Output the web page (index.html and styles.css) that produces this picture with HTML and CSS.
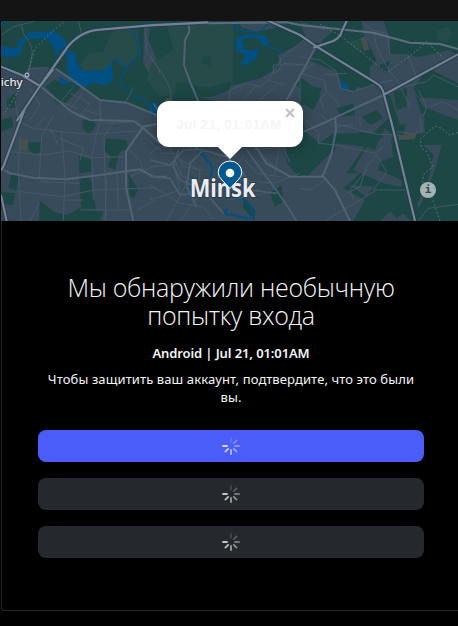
FILE: index.html
```html
<!DOCTYPE html>
<html lang="ru">
<head>
<meta charset="utf-8">
<title>Instagram</title>
<link rel="stylesheet" href="styles.css">
</head>
<body>
<header class="topbar"></header>
<main class="card">
<section class="map">
<svg class="tiles" viewBox="3 63 1371 600" preserveAspectRatio="none">
<g class="park">
<path d="M3 63H1374V663H1230L1210 640 1190 655 1170 635 1140 663H1060L1095 600 1030 565 1080 520 1010 520 1060 480 1040 440 990 460 920 530 900 500V430L700 300 480 355 380 308 300 300 215 240 170 205 85 203 75 225 3 195Z"/>
<path d="M137 260L160 240 250 252 190 318 165 306 160 285ZM20 300L47 278 50 322 22 325ZM3 360L35 350 40 380 3 395ZM247 360L280 358 288 375 280 390 265 402 248 385ZM85 428L123 426 123 455 103 463 86 450ZM318 415L380 420 385 445 360 455 345 510 322 500 335 470 312 450ZM237 468L277 480 275 515 238 520ZM238 534H272L288 627 243 625ZM35 525L60 525 48 573 25 562ZM3 575L45 580 40 615 3 612ZM118 600L160 635 200 645 240 625 310 635 300 663H118ZM385 520L415 570 400 595 388 585Z"/>
<path d="M860 380L900 390 930 425V520L895 530 860 490ZM810 580L845 555 850 605 825 620ZM730 590L765 630 765 663 730 625ZM505 310L560 285 565 350 520 370Z"/>
</g>
<g class="land">
<path d="M432 80L450 85 445 120 475 190 450 225 430 190ZM555 105L575 95H625L635 165 610 195 555 193ZM715 63H850L820 85 770 95 725 83ZM590 290L690 258 780 235 840 200 835 165 880 140 915 120 955 145 925 180 1010 215 1025 250 1090 265 1130 250 1150 290 1080 320 1020 320 960 340 900 330 660 305Z"/>
<path d="M900 65L1000 90 960 130 920 120ZM1085 63H1150L1170 115 1170 165 1260 170 1345 150 1374 165V250L1285 205 1240 265 1270 320 1374 360V300L1160 285 1110 240 1110 200 1130 180 1090 100Z"/>
<path d="M900 330L1030 300 1150 285 1170 350 1120 400 1000 400 960 430 920 400ZM1170 285L1240 270 1270 360 1200 375ZM1225 340L1270 340 1275 400 1210 405ZM1100 440L1170 400 1180 470 1140 485 1135 510 1205 540 1205 560 1150 550 1060 510ZM1270 435H1325L1305 510 1260 620 1250 615 1285 540 1300 465ZM930 350L1000 390 945 385ZM1008 430L1095 440 1035 525 990 525ZM1045 555L1120 560 1100 590ZM1155 385L1180 410 1170 430 1145 405Z"/>
</g>
<g class="park">
<path d="M900 260L960 290 940 330 905 310ZM1010 325L1060 310 1065 345 1025 350ZM1085 350L1130 330 1150 355 1110 375ZM1080 395L1140 410 1125 450 1050 425Z"/>
</g>
<g class="meadow">
<path d="M240 195L265 160 310 155 330 105 350 80 415 88 422 165 390 185 380 208 340 178 325 210 255 212ZM500 70H700L698 250 635 265 530 245 525 285 480 290 440 240 455 190 520 150ZM1310 90L1345 80 1355 105 1340 125 1315 120ZM1040 130L1090 110 1110 145 1090 160Z"/>
</g>
<g class="park">
<path d="M458 95L500 85 510 125 480 145 460 130ZM610 170L632 168 630 197 605 190ZM585 270L630 260 690 245 690 270 635 290 585 292ZM700 205L790 210 785 235 705 225ZM820 100L870 80 905 120 875 145 830 140ZM885 250L905 235 940 260 920 290ZM900 250L965 265 950 310 900 315ZM1050 220L1080 240 1065 275 1035 260ZM1180 275L1220 265 1220 320 1190 330ZM1130 200L1170 180 1160 220Z"/>
</g>
<g class="soil"><path d="M58 417L85 418 80 455 57 450ZM1195 405L1250 401 1245 418 1197 420ZM1082 115L1097 108 1108 150 1093 150ZM497 295H515V315H492Z"/></g>
<g class="water">
<path d="M3 63H15L3 83ZM3 137L35 145 60 140 50 130 55 118 75 112 85 98 110 94 140 97 155 90 180 105 200 125 204 150 225 160 232 190 245 210 305 213 332 192 335 182 340 240 320 255 280 250 250 262 225 255 208 230 201 200V165L165 165 162 145 140 115 110 118 78 116 75 130 65 140 65 160 45 170 3 170ZM180 230L210 250 195 258 180 247ZM717 108L750 103 795 107 805 120 805 137 783 137 782 120 735 113 722 125 735 130 735 148 755 152 775 145 776 155 768 177 740 195 718 193 733 180 733 162 708 150 706 130ZM1020 235L1033 250 1047 258 1043 268 1027 270ZM450 305L462 335H468V350L450 340ZM450 310H474V345H460Z"/>
</g>
<g class="park"><path d="M735 120L770 111 785 130 770 150 730 143ZM173 148L187 148 189 155 177 158ZM57 122L66 126 60 132 54 130Z"/></g>
<g class="stream">
<path d="M335 180L345 178 370 190 382 205 360 240 370 265 400 275 405 290 430 296 450 320 466 340M385 195L405 175 424 160 415 125 399 95V85M430 70L445 72 450 85M697 70L705 85 735 93 775 97 795 80 805 70M805 138L850 158"/>
<path class="river" d="M457 330L469 340M592 463H610L618 477 632 493 637 510 632 530M600 445L597 440M700 595L730 598 754 625 761 648 745 656 700 645 678 643 674 635 684 625"/>
</g>
<g class="minor">
<path d="M3 105L40 80 100 65M65 77L70 100 90 130 97 155 92 190 85 220M235 63L245 103M85 205L145 203M400 262L378 305M220 262L182 305M248 280L215 322M300 305V360M210 280L270 310 240 348M182 305L230 325M90 265L120 315 90 360M45 300L55 360M436 85L440 155 475 205 480 220M450 170L490 225 510 265 515 300"/>
<path d="M75 335L60 365 100 385 185 395 270 403 405 393M60 410L55 515 63 663M100 390L135 350M160 345L125 410 118 535M185 395L195 530 190 663M150 385L175 435M180 415L250 445 240 480M30 455L130 465 205 453 280 473 370 470M305 350L290 400 275 475 280 600M345 360L312 410 318 663M320 370L410 365M320 533L315 660M350 520L355 630M60 575L190 590 280 570 470 563M120 545L240 550M120 605L90 663M190 600H250M240 630H390M380 440L425 490 430 520M390 530L470 495M410 630L470 600M255 330L300 345 305 330"/>
<path d="M688 270L740 250 780 260 805 240 850 255M688 270V300M805 240L845 175 900 130 930 105M840 170V210L820 220 820 195H900M730 300L770 255M780 300L830 255M850 190L920 195M900 170L960 180 1010 215 1020 265 1060 275 1130 250 1180 240M900 220L970 240 980 270 960 300 970 320M940 190L900 225 900 330M970 225L1040 220M970 260L1020 320M1090 70L1120 90 1130 140 1160 200 1190 240 1230 320M1120 90L1160 100 1170 165 1225 165M1225 165L1240 210 1255 240M1210 260L1280 245 1300 225 1374 260M1255 270L1280 320 1270 350M1290 320L1330 305 1374 330M960 340L1000 380 1060 375M1260 350L1265 390 1240 402 1190 395"/>
<path d="M920 360L955 400 955 430 1010 435 1125 460 1150 440M1005 370L1130 403 1200 405M1080 350L1080 380M1130 465L1160 515 1120 570M1100 510L1050 570 1060 600M1130 465L1100 500 1080 560 1040 580M1120 570H1215M975 663L1125 573M1255 663L1285 625 1374 613M900 565L930 570 975 540"/>
</g>
<g class="minor">
<path d="M450 425L490 460 530 460 550 500 610 510M450 500L520 495 540 570 450 600M510 440L545 530 660 560M450 555L540 610 610 620 640 660M540 480L600 510 590 600M730 470L700 510 680 590M735 480L770 520 840 530M760 450L850 440 870 490M720 540L820 550 900 520M770 440L830 510M690 600L800 580M500 663L560 550M600 580L540 663M810 540L860 620M840 430L820 540M560 430L590 460M450 330L480 365M480 440L450 460"/>
</g>
<g class="mid">
<path d="M165 205L210 235 300 300 380 308 480 350M120 258L160 290 215 335 235 345 270 360 400 363 425 380 480 430M480 370L430 380 378 455 378 560 400 663M3 505L30 520 100 533 200 538 300 525 420 508 460 530 500 530M565 65L568 95 555 120 552 195 570 245 595 305"/>
<path class="inner" d="M450 480L510 495 550 450 600 448 680 470 730 520 755 570 830 580M535 450L520 500 540 540 610 570 670 640M610 450L570 490 560 560 590 620M450 530L510 535 540 585 670 570M740 450L850 600 890 663M460 310L520 400 600 450"/>
<path d="M760 430L800 490 870 530H970L1005 570 1050 663M900 400L980 365 1150 285M1005 350L1008 390 995 460 972 520 965 530M945 145L910 210 860 300"/>
</g>
<path class="mid north" d="M450 74L620 70 860 67 900 75 1120 98 1230 128 1320 132 1374 147"/>
<g class="shade"><path d="M50 363L120 258 205 138Q245 92 300 89L450 76 625 67M3 200L65 225 120 258 160 208M800 60L900 105 950 140 1130 250Q1148 260 1152 285L1175 370 1245 663M1150 285L1374 163M940 143L1000 123Q1022 112 1025 95L1040 63M75 325L10 500 3 512M3 585L20 663"/></g>
<g class="major"><path d="M50 363L120 258 205 138Q245 92 300 89L450 76 625 67M3 200L65 225 120 258 160 208M800 60L900 105 950 140 1130 250Q1148 260 1152 285L1175 370 1245 663M1150 285L1374 163M940 143L1000 123Q1022 112 1025 95L1040 63M75 325L10 500 3 512M3 585L20 663"/></g>
<path class="trail" d="M190 66L145 106 105 145 85 210 45 290 10 345M960 72L1025 110 1100 170 1160 218 1240 160 1280 125 1330 175M1374 398L1347 405 1325 385 1305 378 1260 418 1265 445 1280 455 1298 500 1270 525 1268 550M1295 590L1320 663"/>
<circle class="town" cx="81" cy="225" r="6"/>
<text class="place" x="-16" y="257" textLength="84" lengthAdjust="spacingAndGlyphs">vichy</text>
<text class="city" x="569" y="591" textLength="198" lengthAdjust="spacingAndGlyphs">Minsk</text>
</svg>
<div class="popup"><span class="popup-date">Jul 21, 01:01AM</span><svg class="close" viewBox="0 0 10 10"><path d="M1 1l8 8M9 1L1 9"/></svg></div>
<svg class="pin" viewBox="0 0 26 30"><path d="M13 28.5L5 20Q1.2 16.5 1.2 12.5a11.8 11.5 0 0 1 23.6 0Q24.8 16.5 21 20Z"/><circle cx="13" cy="13" r="4.3"/></svg>
<div class="info">i</div>
</section>
<section class="content">
<h1>Мы обнаружили необычную<br>попытку входа</h1>
<p class="device">Android | Jul 21, 01:01AM</p>
<p class="hint">Чтобы защитить ваш аккаунт, подтвердите, что это были<br>вы.</p>
<div class="actions">
<button class="btn primary"><svg class="spin" viewBox="-9 -9 18 18"><path opacity=".15" d="M0-4V-8"/><path opacity=".32" d="M2.8-2.8L5.6-5.6"/><path opacity=".4" d="M4 0H8"/><path opacity=".5" d="M2.8 2.8L5.6 5.6"/><path opacity=".65" d="M0 4V8"/><path opacity=".8" d="M-2.8 2.8L-5.6 5.6"/><path opacity=".85" d="M-4 0H-8"/></svg></button>
<button class="btn"><svg class="spin" viewBox="-9 -9 18 18"><path opacity=".15" d="M0-4V-8"/><path opacity=".25" d="M2.8-2.8L5.6-5.6"/><path opacity=".4" d="M4 0H8"/><path opacity=".5" d="M2.8 2.8L5.6 5.6"/><path opacity=".6" d="M0 4V8"/><path opacity=".75" d="M-2.8 2.8L-5.6 5.6"/><path opacity=".8" d="M-4 0H-8"/></svg></button>
<button class="btn"><svg class="spin" viewBox="-9 -9 18 18"><path opacity=".15" d="M0-4V-8"/><path opacity=".25" d="M2.8-2.8L5.6-5.6"/><path opacity=".4" d="M4 0H8"/><path opacity=".5" d="M2.8 2.8L5.6 5.6"/><path opacity=".6" d="M0 4V8"/><path opacity=".75" d="M-2.8 2.8L-5.6 5.6"/><path opacity=".8" d="M-4 0H-8"/></svg></button>
</div>
</section>
</main>
</body>
</html>
```
FILE: styles.css
```css
* { box-sizing: border-box; }
body { margin: 0; height: 626px; overflow: hidden; background: #000; color: #f5f5f5; font-family: "Noto Sans", "Open Sans", sans-serif; }
.topbar { height: 21px; background: #141414; }
.card { height: 590px; margin-left: 1px; border-left: 1px solid #262626; border-bottom: 1px solid #262626; border-bottom-left-radius: 3px; }
.map { position: relative; width: 457px; height: 200px; margin-left: -1px; overflow: hidden; background: #384b5a; border-top-left-radius: 3px; }
.tiles { display: block; width: 457px; height: 200px; }
.park { fill: #1c4745; }
.land { fill: #384b5a; }
.meadow { fill: #274b49; }
.soil { fill: #45514d; }
.water { fill: #005083; }
.stream path { fill: none; stroke: #005083; stroke-width: 4; }
.stream .river { stroke-width: 6; }
.minor path { fill: none; stroke: #455967; stroke-width: 3; }
.mid, .mid path { fill: none; stroke: #506374; stroke-width: 6; stroke-linejoin: round; }
.mid .inner { stroke: #4a5e6f; stroke-width: 5; }
.north { stroke: #5c6d80; }
.shade path { fill: none; stroke: #263b49; stroke-width: 13; stroke-linejoin: round; opacity: .7; }
.major path { fill: none; stroke: #748297; stroke-width: 6.5; stroke-linejoin: round; }
.trail { fill: none; stroke: #667f80; stroke-width: 3; stroke-dasharray: 6 6; opacity: .75; }
.town { fill: #384b5a; stroke: #d0d5d8; stroke-width: 3; }
.place, .city { font-family: "Noto Sans", sans-serif; fill: #e9ecf5; stroke: #26343e; stroke-width: 5; paint-order: stroke; }
.place { font-size: 34px; font-weight: 500; }
.city { font-size: 77px; font-weight: 700; }
.popup { position: absolute; left: 156px; top: 80px; width: 146px; height: 46px; border-radius: 12px; background: #fff; display: flex; align-items: center; justify-content: center; box-shadow: 0 2px 14px rgba(0,0,0,.35); }
.popup::after { content: ""; position: absolute; left: 60px; top: 45px; border: 13px solid transparent; border-top-color: #fff; border-bottom: 0; }
.popup-date { font: 700 13px "Liberation Sans", sans-serif; letter-spacing: .5px; margin-left: -2px; color: #f5f5f5; white-space: nowrap; }
.close { position: absolute; width: 10px; height: 10px; right: 8px; top: 7px; fill: none; stroke: #c3c3c3; stroke-width: 2.2; }
.pin { position: absolute; left: 216px; top: 139px; width: 26px; height: 30px; }
.pin path { fill: #005a8f; stroke: #fff; stroke-width: 1; }
.pin circle { fill: #fff; }
.info { position: absolute; left: 419px; top: 161px; width: 16px; height: 16px; border-radius: 50%; background: #a2b3b2; color: #304b50; font: 700 11px/16px "DejaVu Sans Mono", monospace; text-align: center; }
.content { padding: 52px 34px 0 36px; text-align: center; }
h1 { margin: 0; font: 300 25px/28px "Open Sans", sans-serif; letter-spacing: -.3px; white-space: nowrap; }
.device { margin: 15px 0 0; font-size: 13px; line-height: 18px; font-weight: 600; letter-spacing: -.1px; }
.hint { margin: 8px -10px 0; font-size: 13px; line-height: 18px; letter-spacing: .11px; white-space: nowrap; }
.actions { display: flex; flex-direction: column; gap: 16px; margin-top: 24px; }
.btn { height: 32px; border: 0; border-radius: 8px; background: #25282c; padding: 0; display: flex; align-items: center; justify-content: center; }
.primary { background: #4a5df9; }
.spin { width: 18px; height: 18px; fill: none; stroke: #eee; stroke-width: 1.8; stroke-linecap: round; }
```
